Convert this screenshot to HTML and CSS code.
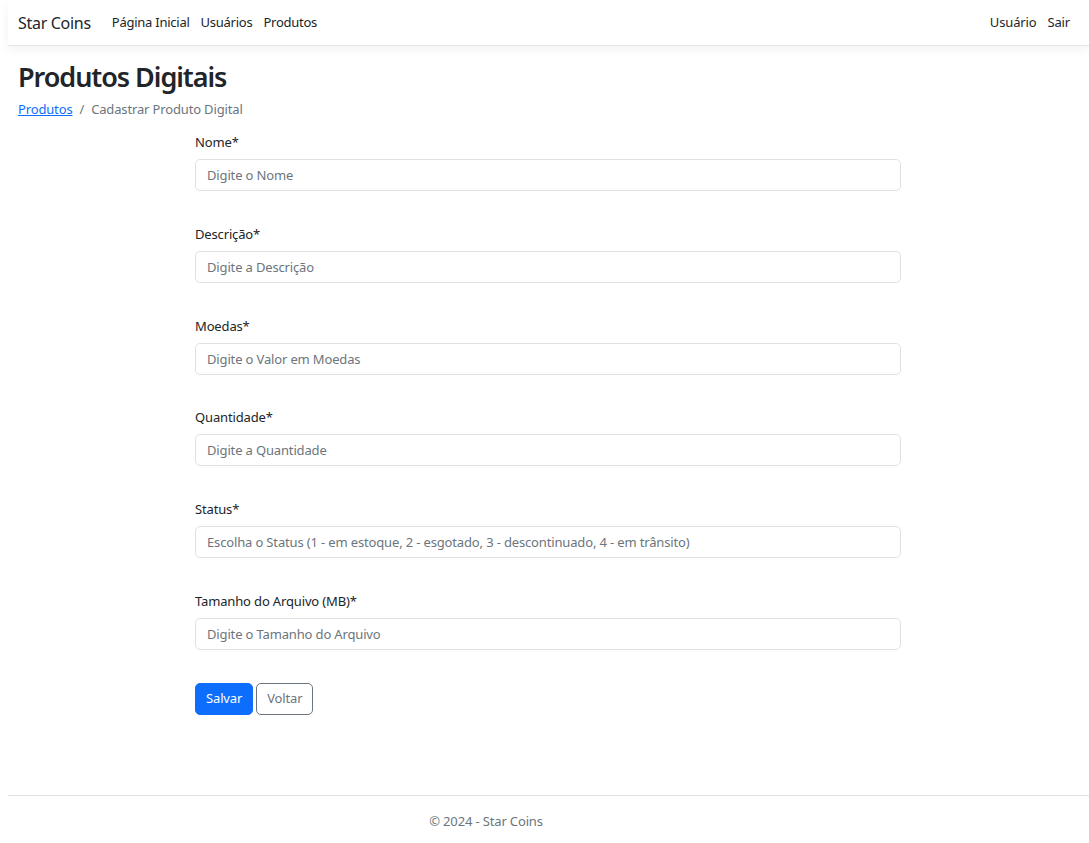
FILE: index.html
```html
<!DOCTYPE html>
<html lang="pt-BR">
<head>
<meta charset="utf-8">
<title>Produtos Digitais - Star Coins</title>
<link rel="stylesheet" href="styles.css">
</head>
<body>
<div class="page">
  <header class="navbar">
    <a class="brand" href="#">Star Coins</a>
    <nav class="nav-left">
      <a href="#">Página Inicial</a>
      <a href="#">Usuários</a>
      <a href="#">Produtos</a>
    </nav>
    <nav class="nav-right">
      <a href="#">Usuário</a>
      <a href="#">Sair</a>
    </nav>
  </header>

  <main class="main">
    <h1 class="title">Produtos Digitais</h1>
    <ol class="breadcrumb">
      <li><a href="#">Produtos</a></li>
      <li class="sep">/</li>
      <li class="active">Cadastrar Produto Digital</li>
    </ol>

    <form class="form">
      <div class="group">
        <label>Nome*</label>
        <input type="text" placeholder="Digite o Nome">
      </div>
      <div class="group">
        <label>Descrição*</label>
        <input type="text" placeholder="Digite a Descrição">
      </div>
      <div class="group">
        <label>Moedas*</label>
        <input type="text" placeholder="Digite o Valor em Moedas">
      </div>
      <div class="group">
        <label>Quantidade*</label>
        <input type="text" placeholder="Digite a Quantidade">
      </div>
      <div class="group">
        <label>Status*</label>
        <input type="text" placeholder="Escolha o Status (1 - em estoque, 2 - esgotado, 3 - descontinuado, 4 - em trânsito)">
      </div>
      <div class="group">
        <label>Tamanho do Arquivo (MB)*</label>
        <input type="text" placeholder="Digite o Tamanho do Arquivo">
      </div>
      <div class="actions">
        <button type="button" class="btn btn-primary">Salvar</button>
        <button type="button" class="btn btn-outline">Voltar</button>
      </div>
    </form>
  </main>

  <footer class="footer">
    <div class="footer-inner">© 2024 - Star Coins</div>
  </footer>
</div>
</body>
</html>
```
FILE: styles.css
```css
html, body {
  margin: 0;
  padding: 0;
  background: #fff;
}
body {
  font-family: "Noto Sans", "Open Sans", sans-serif;
  font-size: 13px;
  letter-spacing: -0.15px;
  line-height: 21px;
  color: #212529;
}
.page {
  margin-left: 8px;
}
.navbar {
  display: flex;
  align-items: center;
  height: 46px;
  padding: 0 10px;
  background: #fff;
  border-bottom: 1px solid #e5e7eb;
  box-shadow: 0 4px 10px rgba(0, 0, 0, 0.05);
  box-sizing: border-box;
}
.navbar a {
  text-decoration: none;
  color: #212529;
}
.brand {
  font-size: 16px;
  letter-spacing: -0.3px;
  margin-right: 21px;
  padding-top: 1px;
}
.nav-left, .nav-right {
  display: flex;
  gap: 11px;
}
.nav-left a {
  letter-spacing: -0.25px;
}
.nav-right {
  margin-left: auto;
  margin-right: 9px;
}
.main {
  padding: 0 10px;
}
.title {
  margin: 14px 0 0;
  font-size: 27px;
  font-weight: 600;
  letter-spacing: -1.05px;
  line-height: 34px;
}
.breadcrumb {
  list-style: none;
  display: flex;
  gap: 7px;
  margin: 5px 0 0;
  padding: 0;
  color: #6c757d;
}
.breadcrumb a {
  color: #0d6efd;
}
.form {
  margin: 12px 0 0 177px;
  width: 706px;
}
.group {
  margin-bottom: 32.8px;
}
.group label {
  display: block;
  margin-bottom: 6px;
}
.group input {
  display: block;
  width: 100%;
  box-sizing: border-box;
  height: 32px;
  padding: 5px 11px;
  font: inherit;
  letter-spacing: inherit;
  color: #212529;
  border: 1px solid #dee2e6;
  border-radius: 5px;
  background: #fff;
}
.group input::placeholder {
  color: #6c757d;
}
.actions {
  display: flex;
  gap: 3px;
  margin-top: 2px;
}
.btn {
  font: inherit;
  letter-spacing: inherit;
  height: 32px;
  padding: 0 10px;
  border-radius: 5px;
  cursor: pointer;
}
.btn-primary {
  background: #0d6efd;
  border: 1px solid #0d6efd;
  color: #fff;
}
.btn-outline {
  background: #fff;
  border: 1px solid #6c757d;
  color: #6c757d;
}
.footer {
  margin-top: 80px;
  border-top: 1px solid #dee2e6;
}
.footer-inner {
  width: 956px;
  text-align: center;
  padding-top: 15px;
  color: #6c757d;
}
```
